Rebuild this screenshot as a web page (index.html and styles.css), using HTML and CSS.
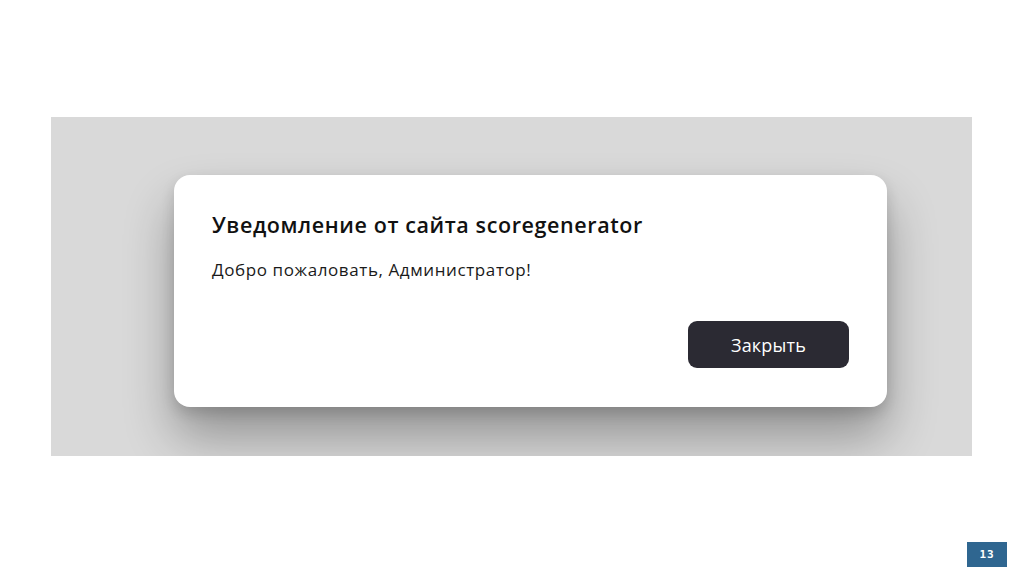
FILE: index.html
```html
<!DOCTYPE html>
<html lang="ru">
<head>
<meta charset="utf-8">
<title>Уведомление</title>
<link rel="stylesheet" href="styles.css">
</head>
<body>
<div class="slide">
  <div class="panel">
    <div class="dialog">
      <div class="title">Уведомление от сайта scoregenerator</div>
      <div class="message">Добро пожаловать, Администратор!</div>
      <div class="actions">
        <button class="btn">Закрыть</button>
      </div>
    </div>
  </div>
  <div class="footer">
    <div class="page-num">13</div>
  </div>
</div>
</body>
</html>
```
FILE: styles.css
```css
html, body {
  margin: 0;
  padding: 0;
  background: #ffffff;
}
.slide {
  width: 1024px;
  height: 574px;
  display: flex;
  flex-direction: column;
  padding-top: 117px;
  box-sizing: border-box;
  overflow: hidden;
}
.panel {
  margin-left: 51px;
  width: 921px;
  height: 339px;
  background: #d9d9d9;
  padding: 58px 0 0 123px;
  box-sizing: border-box;
  overflow: hidden;
}
.dialog {
  width: 713px;
  height: 232px;
  box-sizing: border-box;
  background: #ffffff;
  border-radius: 16px;
  box-shadow: 0 30px 50px rgba(0,0,0,0.32), 0 6px 14px rgba(0,0,0,0.14);
  padding: 36px 38px 39px 38px;
  display: flex;
  flex-direction: column;
  font-family: "Open Sans", "Noto Sans", sans-serif;
  color: #111111;
}
.title {
  font-size: 21.5px;
  font-weight: 600;
  line-height: 28px;
  letter-spacing: 0.6px;
}
.message {
  margin-top: 20px;
  font-size: 17px;
  line-height: 22px;
  letter-spacing: 0.6px;
  color: #1a1a1a;
}
.actions {
  margin-top: auto;
  display: flex;
  justify-content: flex-end;
}
.btn {
  width: 161px;
  height: 47px;
  border: none;
  border-radius: 9px;
  background: #2b2a33;
  color: #ffffff;
  font-family: "Open Sans", "Noto Sans", sans-serif;
  font-size: 18px;
  letter-spacing: 0.2px;
  padding: 0;
}
.footer {
  display: flex;
  justify-content: flex-end;
  margin-top: 86px;
  padding-right: 17px;
}
.page-num {
  width: 40px;
  height: 25px;
  background: #2f6690;
  color: #ffffff;
  font-family: "DejaVu Sans Mono", monospace;
  font-size: 11px;
  font-weight: bold;
  display: flex;
  align-items: center;
  justify-content: center;
  letter-spacing: 1px;
}
```
